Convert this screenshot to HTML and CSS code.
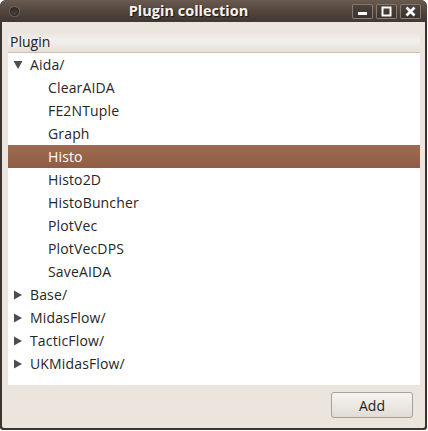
FILE: index.html
```html
<!DOCTYPE html>
<html>
<head>
<meta charset="utf-8">
<title>Plugin collection</title>
<link rel="stylesheet" href="styles.css">
</head>
<body>
<div class="window">
  <div class="titlebar">
    <div class="tb-left"><span class="tb-circle"></span></div>
    <div class="tb-title">Plugin collection</div>
    <div class="tb-buttons">
      <span class="tb-btn"><svg width="21" height="15" viewBox="0 0 21 15"><rect x="6" y="8" width="9" height="3" fill="#fff"/></svg></span>
      <span class="tb-btn"><svg width="21" height="15" viewBox="0 0 21 15"><rect x="6.5" y="3.5" width="8" height="8" fill="none" stroke="#fff" stroke-width="2"/></svg></span>
      <span class="tb-btn"><svg width="21" height="15" viewBox="0 0 21 15"><path d="M6.5 3.5 L14.5 11.5 M14.5 3.5 L6.5 11.5" stroke="#fff" stroke-width="2.6"/></svg></span>
    </div>
  </div>
  <div class="content">
    <div class="tree">
      <div class="header">Plugin</div>
      <div class="rows">
        <div class="row top"><svg class="arrow" width="10" height="10" viewBox="0 0 10 10"><polygon points="0.5,1 9.5,1 5,9" fill="#4e4e4e"/></svg><span>Aida/</span></div>
        <div class="row child">ClearAIDA</div>
        <div class="row child">FE2NTuple</div>
        <div class="row child">Graph</div>
        <div class="row child selected">Histo</div>
        <div class="row child">Histo2D</div>
        <div class="row child">HistoBuncher</div>
        <div class="row child">PlotVec</div>
        <div class="row child">PlotVecDPS</div>
        <div class="row child">SaveAIDA</div>
        <div class="row top"><svg class="arrow" width="10" height="10" viewBox="0 0 10 10"><polygon points="1,0.5 9,5 1,9.5" fill="#4e4e4e"/></svg><span>Base/</span></div>
        <div class="row top"><svg class="arrow" width="10" height="10" viewBox="0 0 10 10"><polygon points="1,0.5 9,5 1,9.5" fill="#4e4e4e"/></svg><span>MidasFlow/</span></div>
        <div class="row top"><svg class="arrow" width="10" height="10" viewBox="0 0 10 10"><polygon points="1,0.5 9,5 1,9.5" fill="#4e4e4e"/></svg><span>TacticFlow/</span></div>
        <div class="row top"><svg class="arrow" width="10" height="10" viewBox="0 0 10 10"><polygon points="1,0.5 9,5 1,9.5" fill="#4e4e4e"/></svg><span>UKMidasFlow/</span></div>
      </div>
    </div>
    <div class="footer">
      <button class="add">Add</button>
    </div>
  </div>
</div>
</body>
</html>
```

FILE: styles.css
```css
html, body {
  margin: 0;
  padding: 0;
  background: #ffffff;
}
body {
  font-family: "Open Sans", "Noto Sans", "DejaVu Sans", sans-serif;
  font-size: 14px;
  color: #262626;
}
.window {
  width: 427px;
  height: 430px;
  box-sizing: border-box;
  display: flex;
  flex-direction: column;
  border-radius: 6px 6px 3px 3px;
  overflow: hidden;
  background: #3b3530;
  padding: 0 2px 2px 0;
}
.titlebar {
  height: 22px;
  flex: none;
  display: flex;
  align-items: center;
  background: linear-gradient(#6a5a50, #50443c 55%, #413833);
  border-radius: 6px 6px 0 0;
  margin-right: -2px;
}
.tb-left {
  width: 25px;
  flex: none;
  display: flex;
  align-items: center;
  padding-left: 10px;
  box-sizing: border-box;
}
.tb-circle {
  width: 9px;
  height: 9px;
  box-sizing: border-box;
  border-radius: 50%;
  border: 1px solid #2a2420;
  background: linear-gradient(#332c28, #4f443d);
  box-shadow: 0 0 0 1px rgba(160,145,135,0.35);
}
.tb-title {
  flex: 1;
  text-align: center;
  color: #f6f2ee;
  font-weight: bold;
  font-size: 14.5px;
  text-shadow: 1px 1px 1px #1c1714;
  line-height: 22px;
}
.tb-buttons {
  display: flex;
  gap: 3px;
  padding-right: 6px;
  align-items: center;
}
.tb-btn {
  width: 21px;
  height: 15px;
  box-sizing: border-box;
  border: 1px solid rgba(200,185,175,0.5);
  border-radius: 2px;
  background: linear-gradient(#4e433c, #3b332e);
  display: flex;
  align-items: center;
  justify-content: center;
  overflow: hidden;
}
.tb-btn svg {
  flex: none;
}
.content {
  flex: 1;
  margin-left: 2px;
  background: #ebe5de;
  display: flex;
  flex-direction: column;
  padding: 10px 5px 0 6px;
  border-radius: 0 0 2px 2px;
}
.tree {
  height: 353px;
  display: flex;
  flex-direction: column;
  background: #ffffff;
}
.header {
  height: 20px;
  line-height: 20px;
  padding-left: 2px;
  background: linear-gradient(#eae4dd, #f3f0ec 45%, #e6dfd7);
  border-bottom: 1px solid #cdbfb1;
  color: #222;
  flex: none;
}
.rows {
  flex: 1;
  display: flex;
  flex-direction: column;
}
.row {
  height: 23px;
  line-height: 23px;
  display: flex;
  align-items: center;
  white-space: nowrap;
  letter-spacing: 0.15px;
}
.row.top {
  padding-left: 5px;
}
.row.top .arrow {
  flex: none;
  margin-right: 7px;
}
.row.child {
  padding-left: 40px;
}
.row.selected {
  background: linear-gradient(#9d6b51, #8e5d44);
  color: #ffffff;
}
.footer {
  flex: 1;
  display: flex;
  justify-content: flex-end;
  align-items: flex-start;
  padding-top: 7px;
  padding-right: 7px;
}
.add {
  width: 82px;
  height: 26px;
  font-family: inherit;
  font-size: 14px;
  color: #1e1e1e;
  border: 1px solid #a7a29c;
  border-radius: 3px;
  background: linear-gradient(#f6f4f1, #ece8e3 50%, #e1dbd4);
  padding: 0;
}
```
